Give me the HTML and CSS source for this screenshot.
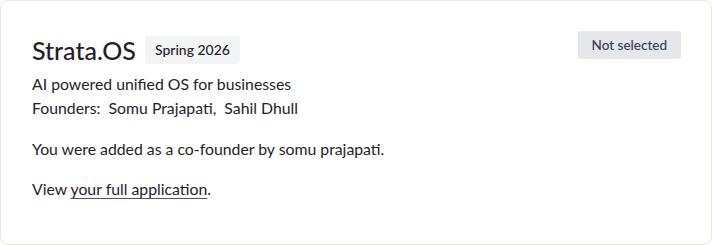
FILE: index.html
```html
<!DOCTYPE html>
<html>
<head>
	<meta charset="utf-8">
	<title>Application</title>
	<link rel="stylesheet" href="styles.css">
</head>
<body>
<div class="card">
	<div class="top">
		<div class="head">
			<h2 class="name">Strata.OS</h2>
			<span class="batch">Spring 2026</span>
		</div>
		<span class="status">Not selected</span>
	</div>
	<p class="line tagline">AI powered unified OS for businesses</p>
	<p class="line">Founders:&nbsp; Somu Prajapati,&nbsp; Sahil Dhull</p>
	<p class="line note">You were added as a co-founder by somu prajapati.</p>
	<p class="line note">View <a href="#">your full application</a>.</p>
</div>
</body>
</html>
```
FILE: styles.css
```css
body {
	margin:0;
	background:#fff;
	font-family:"Lato", "Noto Sans", sans-serif;
	color:#1f2328;
	}
.card {
	box-sizing:border-box;
	height:245px;
	border:1px solid #e6e6e3;
	border-radius:8px;
	padding:30px 30px 0 31px;
	}
.top {
	display:flex;
	justify-content:space-between;
	align-items:flex-start;
	}
.head {
	display:flex;
	align-items:center;
	gap:9px;
	margin-top:4px;
	}
.name {
	margin:0;
	font-size:25px;
	font-weight:500;
	line-height:30px;
	}
.batch {
	background:#f3f4f6;
	border-radius:3px;
	font-size:14px;
	font-weight:500;
	padding:5px 10px;
	line-height:18px;
	}
.status {
	background:#e5e7eb;
	color:#374151;
	border-radius:3px;
	font-size:13.5px;
	font-weight:500;
	padding:5px 14px;
	line-height:18px;
	}
.line {
	margin:0;
	font-size:15.8px;
	line-height:24px;
	}
.tagline {
	margin-top:7px;
	}
.note {
	margin-top:17px;
	}
.note + .note {
	margin-top:16px;
	}
a {
	color:inherit;
	text-decoration:underline;
	text-decoration-color:#4b5563;
	text-underline-offset:3px;
	}
```
